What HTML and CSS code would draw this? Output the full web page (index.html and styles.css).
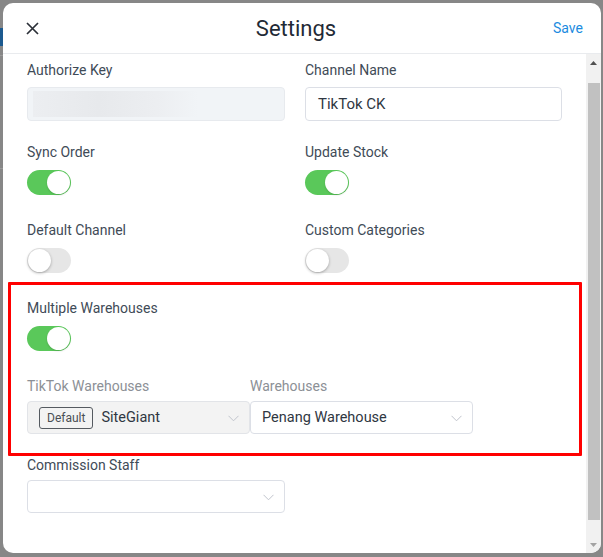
FILE: index.html
```html
<!DOCTYPE html>
<html>
<head>
<meta charset="utf-8">
<link rel="stylesheet" href="styles.css">
</head>
<body>
<div class="modal">
  <div class="header">
    <span class="close"><svg width="13" height="13" viewBox="0 0 13 13"><path d="M1 1L12 12M12 1L1 12" stroke="#2b3038" stroke-width="1.7" fill="none"/></svg></span>
    <h1 class="title">Settings</h1>
    <span class="save">Save</span>
  </div>
  <div class="main">
    <div class="body">
      <div class="grid">
        <div class="field">
          <div class="label">Authorize Key</div>
          <div class="input input-key"><div class="blur"></div></div>
        </div>
        <div class="field">
          <div class="label">Channel Name</div>
          <div class="input">TikTok CK</div>
        </div>
        <div class="field">
          <div class="label">Sync Order</div>
          <div class="toggle on"><span class="knob"></span></div>
        </div>
        <div class="field">
          <div class="label">Update Stock</div>
          <div class="toggle on"><span class="knob"></span></div>
        </div>
        <div class="field">
          <div class="label">Default Channel</div>
          <div class="toggle"><span class="knob"></span></div>
        </div>
        <div class="field">
          <div class="label">Custom Categories</div>
          <div class="toggle"><span class="knob"></span></div>
        </div>
      </div>
      <div class="highlight">
        <div class="field">
          <div class="label">Multiple Warehouses</div>
          <div class="toggle on"><span class="knob"></span></div>
        </div>
        <div class="wh-grid">
          <div class="field">
            <div class="label muted sel-label">TikTok Warehouses</div>
            <div class="input select disabled"><span class="tag">Default</span><span class="val">SiteGiant</span><svg class="chev" width="11" height="7" viewBox="0 0 11 7"><path d="M0.5 0.8L5.5 5.8L10.5 0.8" stroke="#c0c4cc" stroke-width="1" fill="none"/></svg></div>
          </div>
          <div class="field">
            <div class="label muted sel-label">Warehouses</div>
            <div class="input select"><span class="val">Penang Warehouse</span><svg class="chev" width="11" height="7" viewBox="0 0 11 7"><path d="M0.5 0.8L5.5 5.8L10.5 0.8" stroke="#c0c4cc" stroke-width="1" fill="none"/></svg></div>
          </div>
        </div>
      </div>
      <div class="grid after">
        <div class="field">
          <div class="label sel-label">Commission Staff</div>
          <div class="input select"><span class="val"></span><svg class="chev" width="11" height="7" viewBox="0 0 11 7"><path d="M0.5 0.8L5.5 5.8L10.5 0.8" stroke="#c0c4cc" stroke-width="1" fill="none"/></svg></div>
        </div>
      </div>
    </div>
    <div class="scrollbar">
      <div class="sb-btn"><svg width="7" height="4" viewBox="0 0 7 4"><path d="M0 4L3.5 0L7 4Z" fill="#505050"/></svg></div>
      <div class="sb-track"><div class="sb-thumb"></div></div>
      <div class="sb-btn"><svg width="7" height="4" viewBox="0 0 7 4"><path d="M0 0L3.5 4L7 0Z" fill="#a3a3a3"/></svg></div>
    </div>
  </div>
</div>
</body>
</html>
```
FILE: styles.css
```css
html, body {
  margin: 0;
  padding: 0;
}
body {
  width: 603px;
  height: 557px;
  overflow: hidden;
  background-color: #878787;
  background-image:
    linear-gradient(#1c5a8f, #1c5a8f),
    linear-gradient(#9a9a9a, #9a9a9a),
    linear-gradient(#9a9a9a, #9a9a9a);
  background-size: 3px 18px, 3px 1px, 3px 1px;
  background-position: 0 28px, 0 55px, 0 168px;
  background-repeat: no-repeat;
  font-family: Roboto, "Liberation Sans", sans-serif;
  padding: 3px 2px 4px 3px;
  box-sizing: border-box;
}
.modal {
  width: 598px;
  height: 550px;
  background: #fff;
  border-radius: 10px;
  overflow: hidden;
  display: flex;
  flex-direction: column;
}
.header {
  height: 50px;
  flex: none;
  border-bottom: 1px solid #e9ebee;
  display: flex;
  align-items: center;
  justify-content: space-between;
  padding: 0 18px 0 23px;
}
.close {
  display: flex;
  width: 13px;
  height: 13px;
  margin-top: 1px;
}
.title {
  margin: 0;
  font-size: 22px;
  font-weight: 400;
  color: #1f2a36;
}
.save {
  font-size: 14px;
  color: #1b8be0;
}
.main {
  flex: 1;
  display: flex;
  min-height: 0;
}
.body {
  flex: 1;
  overflow: hidden;
  padding: 8px 24px 0 24px;
}
.scrollbar {
  width: 15px;
  flex: none;
  background: #f1f1f1;
  display: flex;
  flex-direction: column;
}
.sb-btn {
  height: 17px;
  display: flex;
  align-items: center;
  justify-content: center;
  flex: none;
}
.sb-track {
  flex: 1;
  padding: 12px 1px 16px 2px;
  display: flex;
}
.sb-thumb {
  flex: 1;
  background: #c1c1c1;
}
.grid {
  display: grid;
  grid-template-columns: 258px 257px;
  column-gap: 20px;
  row-gap: 23px;
}
.grid.after {
  margin-top: 1px;
}
.field {
  display: flex;
  flex-direction: column;
  align-items: flex-start;
}
.label {
  font-size: 14px;
  line-height: 16px;
  color: #3f4b57;
  margin-bottom: 9px;
}
.label.sel-label {
  margin-bottom: 7px;
}
.label.muted {
  color: #8c9096;
}
.input {
  box-sizing: border-box;
  width: 100%;
  height: 34px;
  border: 1px solid #dcdfe6;
  border-radius: 4px;
  display: flex;
  align-items: center;
  padding: 0 12px;
  font-size: 15px;
  color: #2f3742;
}
.input-key {
  background: #f1f4f7;
  border-color: #e7eaee;
  padding: 0 5px;
}
.blur {
  width: 165px;
  height: 26px;
  background: linear-gradient(90deg, #eceef1 0%, #e7e9ec 40%, #eceef1 75%, #f1f4f7 100%);
}
.toggle {
  box-sizing: border-box;
  width: 44px;
  height: 25px;
  border-radius: 13px;
  background: #e6e6e6;
  display: flex;
  align-items: center;
  padding: 1px;
  margin-top: 1px;
  margin-bottom: 4px;
}
.toggle .knob {
  width: 23px;
  height: 23px;
  border-radius: 50%;
  background: #fff;
  box-shadow: 0 1px 3px rgba(0,0,0,0.3);
}
.toggle.on {
  background: #5ac85a;
  justify-content: flex-end;
}
.toggle.on .knob {
  box-shadow: 0 1px 2px rgba(0,0,0,0.15);
}
.highlight {
  position: relative;
  margin-top: 23px;
  padding-bottom: 22px;
}
.highlight::before {
  content: "";
  position: absolute;
  left: -19px;
  right: -20px;
  top: -18px;
  bottom: 0;
  border: 3px solid #ff0000;
  border-radius: 1px;
  pointer-events: none;
}
.wh-grid {
  display: grid;
  grid-template-columns: 223px 223px;
  margin-top: 23px;
}
.select {
  height: 33px;
  font-size: 14.5px;
  padding: 0 10px 0 11px;
}
.select .val {
  flex: 1;
}
.select.disabled {
  background: #f3f3f3;
  border-color: #e2e4e8;
}
.tag {
  box-sizing: border-box;
  height: 22px;
  border: 1px solid #555a60;
  border-radius: 3px;
  font-size: 12px;
  color: #4a4f55;
  display: flex;
  align-items: center;
  padding: 0 7px;
  margin-right: 8px;
}
.chev {
  flex: none;
  margin-top: 1px;
}
```
